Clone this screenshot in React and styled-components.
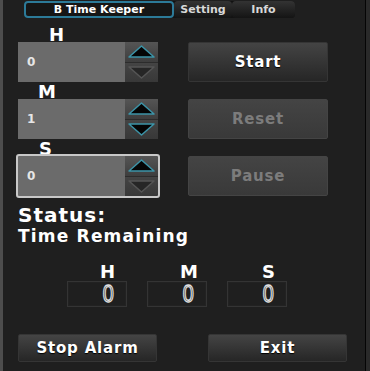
import React from 'react';
import styled, { createGlobalStyle } from 'styled-components';

const GlobalStyle = createGlobalStyle`
    body {
        margin: 0;
        background: #1f1f1f;
        font-family: "DejaVu Sans", "Liberation Sans", sans-serif;
    }
`;

const Frame = styled.div`
    box-sizing: border-box;
    width: 370px;
    height: 371px;
    display: flex;
    flex-direction: column;
    background: #1f1f1f;
    border-left: 3px solid #4d4d4d;
    border-right: 4px solid #2a2a2a;
    box-shadow: inset -1px 0 0 #050505;
    padding: 1px 19px 9px 15px;
    color: #fff;
    font-weight: bold;
`;

const TabBar = styled.div`
    display: flex;
    margin-left: 6px;
    width: 271px;
    height: 17px;
    background: #121212;
    border-radius: 4px;
`;

const Tab = styled.div`
    box-sizing: border-box;
    width: ${p => p.w}px;
    display: flex;
    align-items: center;
    justify-content: center;
    font-size: 11px;
    color: ${p => (p.active ? '#fff' : '#d8d8d8')};
    border-radius: 4px;
    border: ${p => (p.active ? '2px solid #2c7a98' : 'none')};
    background: ${p => (p.active ? '#161616' : 'linear-gradient(#333, #141414)')};
`;

const Controls = styled.div`
    display: grid;
    grid-template-columns: 140px 140px;
    column-gap: 30px;
    row-gap: 2px;
    margin-top: 9px;
`;

const Group = styled.div`
    display: flex;
    flex-direction: column;
`;

const Label = styled.div`
    height: 15px;
    line-height: 15px;
    font-size: 18px;
    padding-left: ${p => p.indent}px;
`;

const Spinner = styled.div`
    display: flex;
    height: 40px;
    outline: ${p => (p.focused ? '2px solid #c8c8c8' : 'none')};
    border-radius: 1px;
`;

const Field = styled.div`
    width: 107px;
    display: flex;
    align-items: center;
    padding-left: 9px;
    box-sizing: border-box;
    background: #6b6b6b;
    color: #e6e6e6;
    font-size: 12px;
`;

const Arrows = styled.div`
    width: 33px;
    display: flex;
    flex-direction: column;
`;

const ArrowCell = styled.div`
    flex: 1;
    display: flex;
    align-items: center;
    justify-content: center;
    background: ${p => (p.up ? 'linear-gradient(#555, #3e3e3e)' : 'linear-gradient(#444, #383838)')};
    border-top: ${p => (p.up ? 'none' : '1px solid #2c2c2c')};
`;

const Button = styled.div`
    box-sizing: border-box;
    align-self: end;
    display: flex;
    align-items: center;
    justify-content: center;
    width: ${p => (p.wide ? 139 : 140)}px;
    height: ${p => (p.short ? 28 : 40)}px;
    font-size: 15px;
    letter-spacing: 0.8px;
    color: ${p => (p.disabled ? '#7c7c7c' : '#fff')};
    background: ${p => (p.disabled ? 'linear-gradient(#444, #393939)' : 'linear-gradient(#444, #262626)')};
    border: 1px solid ${p => (p.disabled ? '#444' : '#353535')};
    border-radius: 2px;
    text-shadow: ${p => (p.disabled ? 'none' : '0 1px 1px #000')};
`;

const Status = styled.div`
    margin-top: 8px;
    font-size: 20px;
    letter-spacing: 1px;
    line-height: 22px;
`;

const Remaining = styled.div`
    font-size: 17px;
    letter-spacing: 1.2px;
    line-height: 20px;
`;

const Readout = styled.div`
    display: flex;
    gap: 20px;
    margin: 17px 0 0 49px;
`;

const Unit = styled.div`
    width: 60px;
    display: flex;
    flex-direction: column;
    align-items: flex-end;
`;

const UnitLabel = styled.div`
    font-size: 18px;
    line-height: 18px;
    height: 18px;
    padding-right: ${p => p.pad}px;
`;

const DigitBox = styled.div`
    box-sizing: border-box;
    width: 60px;
    height: 26px;
    border: 1px solid #343434;
    box-shadow: inset 0 0 0 1px #222;
    display: flex;
    justify-content: flex-end;
    align-items: center;
    padding-right: 12px;
`;

const Digit = styled.span`
    font-family: "Liberation Sans", sans-serif;
    font-weight: normal;
    font-size: 19px;
    line-height: 20px;
    color: transparent;
    -webkit-text-stroke: 1px #e0e0e0;
    display: inline-block;
    transform: scale(1.05, 1.3);
`;

const Footer = styled.div`
    margin-top: auto;
    display: flex;
    justify-content: space-between;
`;

function Arrow({ up, lit }) {
    return (
        <svg width="27" height="13" viewBox="0 0 27 13">
            <polygon
                points={up ? '1,12 13.5,1 26,12' : '1,1 13.5,12 26,1'}
                fill={lit ? '#050505' : '#262626'}
                stroke={lit ? '#3c94a8' : '#555'}
                strokeWidth="1.5"
                strokeLinejoin="round"
            />
        </svg>
    );
}

function Picker({ label, indent, value, downLit, focused }) {
    return (
        <Group>
            <Label indent={indent}>{label}</Label>
            <Spinner focused={focused}>
                <Field>{value}</Field>
                <Arrows>
                    <ArrowCell up><Arrow up lit /></ArrowCell>
                    <ArrowCell><Arrow lit={downLit} /></ArrowCell>
                </Arrows>
            </Spinner>
        </Group>
    );
}

export default function App() {
    return (
        <Frame>
            <GlobalStyle />
            <TabBar>
                <Tab active w={150}>B Time Keeper</Tab>
                <Tab w={58}>Setting</Tab>
                <Tab w={63}>Info</Tab>
            </TabBar>

            <Controls>
                <Picker label="H" indent={31} value="0" />
                <Button>Start</Button>
                <Picker label="M" indent={20} value="1" downLit />
                <Button disabled>Reset</Button>
                <Picker label="S" indent={21} value="0" focused />
                <Button disabled>Pause</Button>
            </Controls>

            <Status>Status:</Status>
            <Remaining>Time Remaining</Remaining>

            <Readout>
                <Unit>
                    <UnitLabel pad={12}>H</UnitLabel>
                    <DigitBox><Digit>0</Digit></DigitBox>
                </Unit>
                <Unit>
                    <UnitLabel pad={9}>M</UnitLabel>
                    <DigitBox><Digit>0</Digit></DigitBox>
                </Unit>
                <Unit>
                    <UnitLabel pad={12}>S</UnitLabel>
                    <DigitBox><Digit>0</Digit></DigitBox>
                </Unit>
            </Readout>

            <Footer>
                <Button wide short>Stop Alarm</Button>
                <Button wide short>Exit</Button>
            </Footer>
        </Frame>
    );
}
